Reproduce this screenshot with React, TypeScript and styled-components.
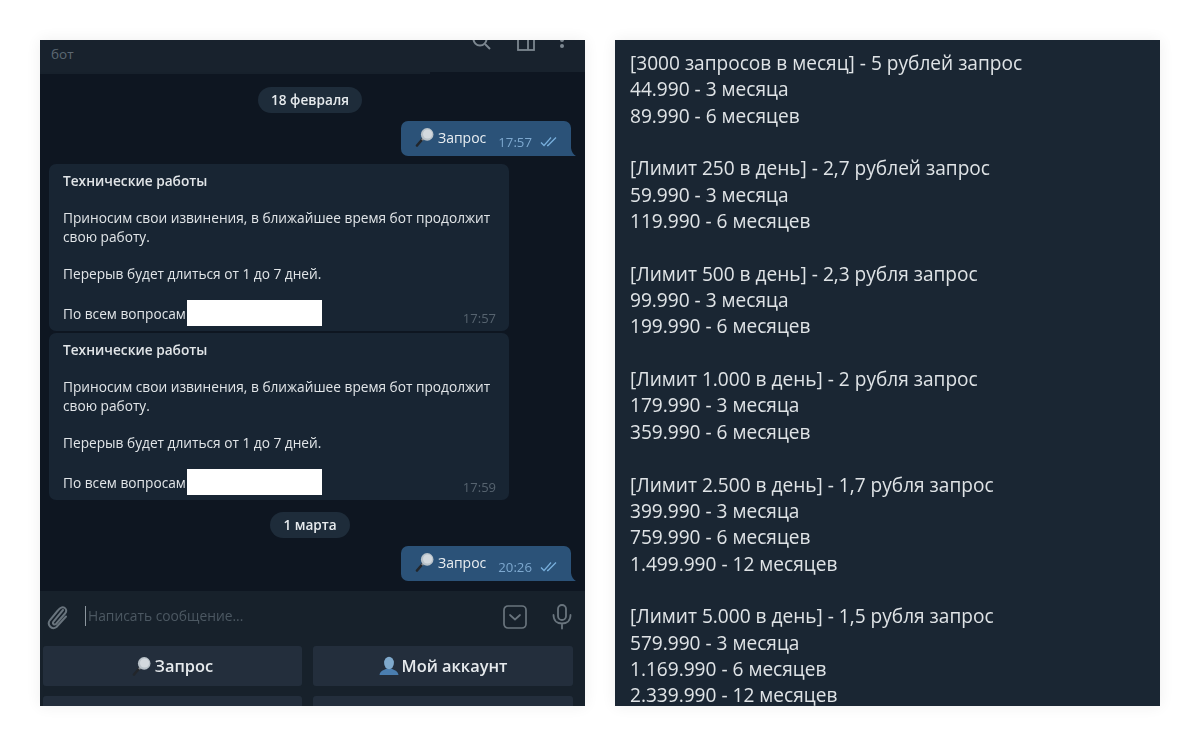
import React from "react";
import styled, { createGlobalStyle } from "styled-components";

const Global = createGlobalStyle`
  html, body { margin: 0; padding: 0; background: #fff; }
  body { font-family: "Open Sans", "Noto Sans", "Liberation Sans", sans-serif; }
`;

const Stage = styled.div`
  width: 1200px; height: 746px; box-sizing: border-box; padding: 40px;
  display: flex; gap: 30px; overflow: hidden;
`;
const Card = styled.div`
  width: 545px; height: 666px; flex: none; overflow: hidden;
  box-shadow: 0 0 14px rgba(0,0,0,.07);
  display: flex; flex-direction: column;
  filter: blur(0.35px);
`;
const Phone = styled(Card)`background: #0e1621;`;
const Prices = styled(Card)`
  width: 545px; background: #1a2633; color: #dfe3e6; padding: 10px 0 0 15px; box-sizing: border-box;
  font-size: 19.1px; line-height: 26.35px;
`;
const PriceLine = styled.div`white-space: pre; min-height: 26.35px;`;

const Header = styled.div`
  height: 32px; flex: none; background: #18222d; display: flex; align-items: flex-start;
  justify-content: space-between; padding: 0 20px 0 11px; overflow: hidden;
`;
const HeaderStrip = styled.div`
  height: 2px; width: 390px; flex: none; background: #17212c;
`;
const Sub = styled.div`font-size: 13.5px; color: #5d6973; line-height: 16px; margin-top: 6px;`;
const HeaderIcons = styled.div`display: flex; gap: 23px; margin-top: -10px; align-items: flex-start; color: #7c8790;`;

const Messages = styled.div`
  height: 517px; flex: none; display: flex; flex-direction: column; align-items: center;
  padding: 13px 14px 0 9px; box-sizing: border-box;
`;
const DatePill = styled.div`
  background: #1e2c3a; color: #e6eaed; font-size: 13.6px; font-weight: 600; height: 26px; line-height: 25px;
  padding: 0 13px; border-radius: 13px; margin-bottom: 8px;
`;
const OutRow = styled.div`align-self: flex-end; position: relative; margin-bottom: 8px;`;
const OutBubble = styled.div`
  width: 170px; height: 35px; box-sizing: border-box; background: #2b5278; border-radius: 7px 7px 0 7px;
  display: flex; align-items: flex-start; padding: 6px 0 0 14px; color: #e8edf1; font-size: 14px; line-height: 22px;
`;
const Tail = styled.svg`position: absolute; right: -5px; bottom: 0;`;
const OutLabel = styled.span`margin-left: 3px;`;
const OutTime = styled.span`color: #7da8cf; font-size: 13.2px; margin-left: 12px; margin-top: 4px;`;
const Checks = styled.svg`margin-left: 8px; margin-top: 9px;`;

const InBubble = styled.div`
  align-self: flex-start; width: 460px; height: 167px; box-sizing: border-box; background: #182533;
  border-radius: 7px; padding: 7px 13px 0 14px; color: #e1e5e8; font-size: 13.7px; line-height: 19px;
  margin-bottom: ${(p: { $mb: number }) => p.$mb}px; display: flex; flex-direction: column;
`;
const InTitle = styled.div`font-weight: 600; height: 37px;`;
const InText = styled.div`height: ${(p: { $h: number }) => p.$h}px;`;
const InFoot = styled.div`display: flex; align-items: center; height: 26px; margin-top: -2px;`;
const Redact = styled.span`width: 135px; height: 26px; background: #fff; flex: none; margin-left: 1px;`;
const InTime = styled.span`margin-left: auto; color: #56636f; font-size: 13px; margin-top: 10px;`;

const Composer = styled.div`
  height: 55px; flex: none; background: #17212b; display: flex; align-items: center; padding: 0 12px 0 7px;
  color: #5c6771; font-size: 13.8px;
`;
const Caret = styled.span`width: 1px; height: 20px; background: #8d979f; margin: -6px 3px 0 16px;`;
const Placeholder = styled.span`flex: 1; color: #4c5862; margin-top: -7px; margin-left: -1px;`;
const ComposerIcon = styled.svg`flex: none; margin-left: ${(p: { $ml?: number }) => p.$ml ?? 0}px; margin-top: -4px; color: #69747d;`;

const Keys = styled.div`
  flex: 1; background: #17212b; display: grid; grid-template-columns: 259px 260px; column-gap: 11px; row-gap: 10px;
  padding: 0 12px 0 3px; grid-auto-rows: 40px;
`;
const Key = styled.div`
  background: #232e3c; border-radius: 3px; color: #e6eaed; font-size: 16.4px; font-weight: 600;
  display: flex; align-items: center; justify-content: center; gap: 3px; box-sizing: border-box; padding-bottom: 1px;
`;

const Loupe = ({ size = 20 }: { size?: number }) => (
  <svg width={size} height={size} viewBox="0 0 20 20" style={{ flex: "none" }}>
    <path d="M2 18.5 L8 11.5" stroke="#22262b" strokeWidth="2.6" strokeLinecap="round" />
    <path d="M7 13 L9.5 10.5" stroke="#8a8f94" strokeWidth="2.4" />
    <circle cx="12.2" cy="7.4" r="6.3" fill="#b9c2c9" />
    <circle cx="12.6" cy="7" r="4.6" fill="#d3d9de" />
  </svg>
);
const Person = () => (
  <svg width="20" height="20" viewBox="0 0 20 20" style={{ flex: "none" }}>
    <path d="M0.5 19 C1 14.5 6 14 7.5 12.6 L12.5 12.6 C14 14 19 14.5 19.5 19 Z" fill="#4a7eb0" />
    <ellipse cx="10" cy="7" rx="4.9" ry="6.2" fill="#7fa9cc" />
  </svg>
);

const Out = ({ time }: { time: string }) => (
  <OutRow>
    <OutBubble>
      <Loupe />
      <OutLabel>Запрос</OutLabel>
      <OutTime>{time}</OutTime>
      <Checks width="18" height="11" viewBox="0 0 18 11" fill="none" stroke="#77aedb" strokeWidth="1.3">
        <path d="M1 6.5 L4 9.5 L11 1.5" />
        <path d="M7 9.5 L8 9.5 L16 1.5" />
      </Checks>
    </OutBubble>
    <Tail width="5" height="8" viewBox="0 0 5 8"><path d="M0 0 C0.5 4 2.5 6.5 5 8 L0 8 Z" fill="#2b5278" /></Tail>
  </OutRow>
);

const Tech = ({ time, mb }: { time: string; mb: number }) => (
  <InBubble $mb={mb}>
    <InTitle>Технические работы</InTitle>
    <InText $h={56}>Приносим свои извинения, в ближайшее время бот продолжит<br />свою работу.</InText>
    <InText $h={38}>Перерыв будет длиться от 1 до 7 дней.</InText>
    <InFoot>
      По всем вопросам<Redact />
      <InTime>{time}</InTime>
    </InFoot>
  </InBubble>
);

const plans = [
  "[3000 запросов в месяц] - 5 рублей запрос", "44.990 - 3 месяца", "89.990 - 6 месяцев", "",
  "[Лимит 250 в день] - 2,7 рублей запрос", "59.990 - 3 месяца", "119.990 - 6 месяцев", "",
  "[Лимит 500 в день] - 2,3 рубля запрос", "99.990 - 3 месяца", "199.990 - 6 месяцев", "",
  "[Лимит 1.000 в день] - 2 рубля запрос", "179.990 - 3 месяца", "359.990 - 6 месяцев", "",
  "[Лимит 2.500 в день] - 1,7 рубля запрос", "399.990 - 3 месяца", "759.990 - 6 месяцев", "1.499.990 - 12 месяцев", "",
  "[Лимит 5.000 в день] - 1,5 рубля запрос", "579.990 - 3 месяца", "1.169.990 - 6 месяцев", "2.339.990 - 12 месяцев",
];

export default function App() {
  return (
    <Stage>
      <Global />
      <Phone>
        <Header>
          <Sub>бот</Sub>
          <HeaderIcons>
            <svg width="22" height="22" viewBox="0 0 22 22" fill="none" stroke="currentColor" strokeWidth="2">
              <circle cx="9" cy="9" r="6.5" /><path d="M14 14 L19 19" />
            </svg>
            <svg width="20" height="22" viewBox="0 0 20 22" fill="none" stroke="currentColor" strokeWidth="1.8">
              <rect x="2" y="1" width="16" height="19" /><path d="M12 1 V20" />
            </svg>
            <svg width="6" height="22" viewBox="0 0 6 22" fill="currentColor">
              <circle cx="3" cy="4" r="2" /><circle cx="3" cy="10" r="2" /><circle cx="3" cy="16" r="2" />
            </svg>
          </HeaderIcons>
        </Header>
        <HeaderStrip />
        <Messages>
          <DatePill>18 февраля</DatePill>
          <Out time="17:57" />
          <Tech time="17:57" mb={2} />
          <Tech time="17:59" mb={12} />
          <DatePill>1 марта</DatePill>
          <Out time="20:26" />
        </Messages>
        <Composer>
          <ComposerIcon width="22" height="26" viewBox="0 0 22 26" fill="none" stroke="currentColor" strokeWidth="2" strokeLinecap="round">
            <path d="M16 6 L6.5 17.5 C5 19.5 7 21.5 9 20 L18 9.5 C21 6 17.5 1.5 13.5 4 C12.5 4.6 11.5 5.8 10 7.5 L3 16 C-0.5 20.5 4.5 26.5 9.5 23 L19 12.5" />
          </ComposerIcon>
          <Caret />
          <Placeholder>Написать сообщение...</Placeholder>
          <ComposerIcon width="24" height="24" viewBox="0 0 24 24" fill="none" stroke="currentColor" strokeWidth="1.7" strokeLinecap="round" strokeLinejoin="round">
            <rect x="1" y="1" width="22" height="22" rx="4" /><path d="M7 10 L12 14.5 L17 10" />
          </ComposerIcon>
          <ComposerIcon $ml={24} width="22" height="26" viewBox="0 0 22 26" fill="none" stroke="currentColor" strokeWidth="1.8" strokeLinecap="round">
            <rect x="7" y="1" width="8" height="15" rx="4" /><path d="M2.5 11 C2.5 17 6.5 19.5 11 19.5 C15.5 19.5 19.5 17 19.5 11 M11 19.5 V24.5" />
          </ComposerIcon>
        </Composer>
        <Keys>
          <Key><Loupe />Запрос</Key>
          <Key><Person />Мой аккаунт</Key>
          <Key />
          <Key />
        </Keys>
      </Phone>
      <Prices>
        {plans.map((l, i) => <PriceLine key={i}>{l}</PriceLine>)}
      </Prices>
    </Stage>
  );
}
